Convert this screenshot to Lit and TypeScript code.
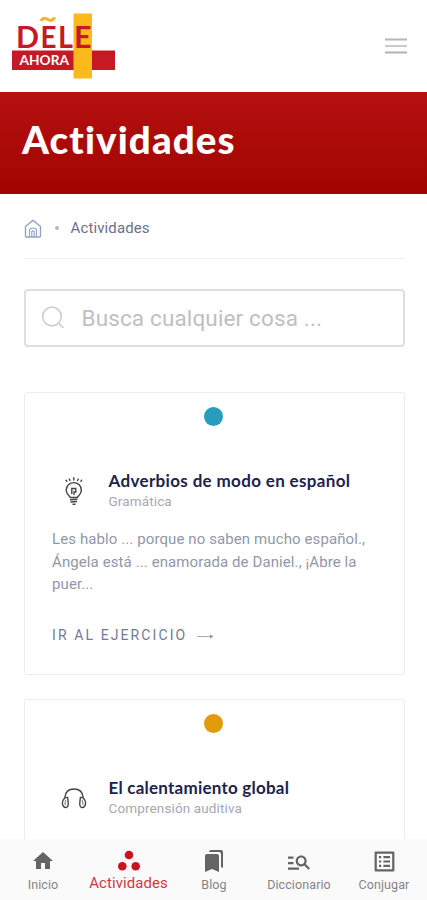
import { LitElement, html, css, svg, nothing } from "lit";
import { customElement, property } from "lit/decorators.js";

const bulb = svg`<g fill="none" stroke="#444" stroke-width="1.4" stroke-linecap="round">
  <path d="M9.300 20.500c-.5-1.700-4.100-3.200-4.100-7.300a7.600 7.600 0 0 1 15.200 0c0 4.100-3.600 5.600-4.100 7.300z"/>
  <path d="M10.800 16.500v-5h4v3.500h-1.800v2.500M9.500 22.800l6.300-.5M10 25l5.500-.5M12 27.200h2"/>
  <path d="M12.800 .8v2.200M8.200 2l.8 1.500M17.300 2l-.8 1.500M5 3.300l.8.900M20.700 3.300l-.8.900"/>
</g>`;

const phones = svg`<g fill="none" stroke="#444" stroke-width="1.4" stroke-linecap="round">
  <path d="M3.800 13.500C4.300 8 7.500 5 13 5s8.700 3 9.200 8.500"/>
  <path d="M6.600 13.500c-2.700-.6-4.900 2-5.200 5.300-.3 3.300 2 5.300 4.200 4.600 1.700-.6 1.700-2.600 1.600-4.800zM19.400 13.500c2.700-.6 4.900 2 5.200 5.300.3 3.300-2 5.300-4.200 4.600-1.700-.6-1.700-2.600-1.600-4.800z"/>
  <path d="M4.600 16.500l-.6 4M21.400 16.500l.6 4" stroke="#999"/>
</g>`;

@customElement("activity-card")
export class ActivityCard extends LitElement {
  @property() heading = "";
  @property() category = "";
  @property() excerpt = "";
  @property() kind = "bulb";

  static styles = css`
    :host { display: block; box-sizing: border-box; height: 283px; padding: 14px 28px 0 27px; background: #fff; border: 1.500px solid #ececee; border-radius: 3px; }
    .dot { width: 19px; height: 19px; border-radius: 50%; margin: 0 auto; background: #279dbe; }
    .dot.phones { background: #e09a0a; }
    .head { display: flex; align-items: center; margin-top: 42px; height: 43px; }
    .icon { width: 26px; height: 29px; margin: 4px 22px 0 9px; flex: none; }
    h2 { margin: 0; font: 700 17px/22px Lato, sans-serif; letter-spacing: .34px; color: #20234b; white-space: nowrap; }
    .phones h2 { letter-spacing: .23px; }
    .cat { font-size: 13.500px; line-height: 18px; color: #a5a8b5; letter-spacing: .13px; }
    p { margin: 17px 0 0 .5px; font-size: 15px; line-height: 22.500px; letter-spacing: .1px; color: #9297a9; white-space: pre; }
    .go { display: flex; align-items: center; margin: 30px 0 0 .5px; font-size: 14px; line-height: 18px; letter-spacing: 2.100px; color: #747a91; }
    .go svg { margin: 3px 0 0 10px; }
  `;

  render() {
    return html`
      <div class="dot ${this.kind}"></div>
      <div class="head ${this.kind}">
        <svg class="icon" viewBox="0 0 26 29">${this.kind === "bulb" ? bulb : phones}</svg>
        <div><h2>${this.heading}</h2><div class="cat">${this.category}</div></div>
      </div>
      ${this.excerpt ? html`<p>${this.excerpt}</p>
      <div class="go">IR AL EJERCICIO
        <svg width="17" height="7" viewBox="0 0 17 7"><path d="M0 3.500h15" stroke="#a9adb9"/><path d="M13 1.500l3.500 2-3.500 2z" fill="#8f94a5"/></svg>
      </div>` : nothing}`;
  }
}

const tabs = [
  { label: "Inicio", cls: "", icon: svg`<path d="M10 20v-6h4v6h5v-8h3L12 3 2 12h3v8z"/>` },
  { label: "Actividades", cls: "active", icon: svg`<circle cx="12" cy="6" r="4.300"/><circle cx="5.300" cy="17.200" r="4.300"/><circle cx="18.700" cy="17.200" r="4.300"/>` },
  { label: "Blog", cls: "", icon: svg`<path d="M19 18l2 1V3c0-1.100-.9-2-2-2H8.990C7.890 1 7 1.900 7 3h10c1.100 0 2 .9 2 2v13zM15 5H5c-1.100 0-2 .9-2 2v16l7-3 7 3V7c0-1.100-.9-2-2-2z"/>` },
  { label: "Diccionario", cls: "", icon: svg`<path transform="translate(-1.200 -.2) scale(1.100)" d="M7 9H2V7h5v2zm0 3H2v2h5v-2zm13.590 7l-3.830-3.830c-.8.520-1.740.830-2.760.830-2.760 0-5-2.240-5-5s2.240-5 5-5 5 2.240 5 5c0 1.020-.31 1.960-.83 2.750L22 17.590 20.590 19zM17 11c0-1.650-1.350-3-3-3s-3 1.350-3 3 1.350 3 3 3 3-1.350 3-3zM2 19h10v-2H2v2z"/>` },
  { label: "Conjugar", cls: "", icon: svg`<path transform="translate(-.7 -.7) scale(1.100)" d="M19 5v14H5V5h14m1.100-2H3.900c-.5 0-.9.400-.9.900v16.200c0 .4.400.9.900.9h16.200c.4 0 .9-.5.900-.9V3.900c0-.5-.5-.9-.9-.9zM11 7h6v2h-6V7zm0 4h6v2h-6v-2zm0 4h6v2h-6zM7 7h2v2H7zm0 4h2v2H7zm0 4h2v2H7z"/>` },
];

@customElement("app-root")
export class AppRoot extends LitElement {
  static styles = css`
    :host { display: flex; flex-direction: column; width: 427px; height: 900px; overflow: hidden; background: #fff; font-family: Roboto, sans-serif; }
    header { height: 92px; flex: none; display: flex; align-items: flex-start; justify-content: space-between; }
    .logo { font-family: Lato, sans-serif; font-weight: 700; }
    .menu { margin: 37px 20px 0 0; }
    .hero { height: 102px; flex: none; box-sizing: border-box; padding: 23px 22px 0; background: linear-gradient(#b51012, #a10500); }
    h1 { margin: 0; font: 900 38.500px/48px Lato, sans-serif; letter-spacing: 1.100px; color: #fff; white-space: nowrap; }
    main { flex: 1; min-height: 0; overflow: hidden; padding: 0 22px 0 23.500px; }
    .crumbs { height: 65px; box-sizing: border-box; border-bottom: 1.500px solid #efeff2; display: flex; align-items: center; padding-top: 4px; font-size: 15px; color: #6c7189; letter-spacing: .12px; }
    .sep { width: 4px; height: 4px; border-radius: 50%; background: #b4b8c5; margin: 0 12px 0 13px; }
    .search { height: 58px; box-sizing: border-box; margin: 30px 0 45px; border: 2px solid #dedede; border-radius: 4px; display: flex; align-items: center; padding-left: 15px; font-size: 22.500px; color: #bfbfbf; letter-spacing: .14px; }
    .search svg { margin-right: 17px; }
    activity-card + activity-card { margin-top: 24px; }
    nav { height: 61px; flex: none; background: #fafafa; display: grid; grid-template-columns: 86px 85px 86px 84px 86px; }
    .tab { display: flex; flex-direction: column; align-items: center; padding-top: 10px; font-size: 12.500px; line-height: 16px; color: #858585; white-space: nowrap; letter-spacing: .1px; }
    .tab svg { width: 24px; height: 24px; fill: #646464; margin-bottom: 4px; }
    .tab.active { color: #cf3941; font-size: 14.900px; }
    .active svg { fill: #c8141c; margin-bottom: 2px; }
  `;

  render() {
    return html`
      <header>
        <svg class="logo" width="125" height="90" viewBox="0 0 125 90">
          <rect x="12" y="50.500" width="103" height="19.500" fill="#c51a25"/>
          <rect x="73.500" y="13.500" width="18.500" height="65" fill="#fbb91c"/>
          <g fill="#c51a25" font-size="30">
            <text x="16" y="47.500" textLength="23" lengthAdjust="spacingAndGlyphs">D</text>
            <text x="40.500" y="47.500" textLength="16" lengthAdjust="spacingAndGlyphs">E</text>
            <text x="58" y="47.500" textLength="15" lengthAdjust="spacingAndGlyphs">L</text>
            <text x="74" y="47.500" textLength="17.500" lengthAdjust="spacingAndGlyphs">E</text>
          </g>
          <path d="M41 21c2-4 4.500-3 7-1.500s4.500 1.500 7-2" fill="none" stroke="#f7b42a" stroke-width="3"/>
          <text x="19.500" y="65" font-size="14" fill="#fff" textLength="49.500" lengthAdjust="spacingAndGlyphs">AHORA</text>
        </svg>
        <svg class="menu" width="22" height="18" viewBox="0 0 22 18"><g stroke-width="2"><path d="M0 2.500h22" stroke="#b5b5b5"/><path d="M0 9h22" stroke="#c9c9c9"/><path d="M0 15.500h22" stroke="#b2b2b2"/></g></svg>
      </header>
      <section class="hero"><h1>Actividades</h1></section>
      <main>
        <div class="crumbs">
          <svg width="18" height="19" viewBox="0 0 18 19" fill="none" stroke="#91a0c8" stroke-width="1.400"><path d="M1.500 7.500L9 1.200l7.500 6.300V17q0 1-1 1h-13q-1 0-1-1z" stroke-linejoin="round"/><path d="M5.500 18v-6.500q0-2.500 3.500-2.500t3.500 2.500V18M7.800 18v-5.500q1.200-1.200 2.400 0V18" stroke-width="1.100"/></svg>
          <i class="sep"></i><span>Actividades</span>
        </div>
        <div class="search">
          <svg width="24" height="24" viewBox="0 0 24 24" fill="none" stroke="#cfcfcf" stroke-width="1.700" stroke-linecap="round"><circle cx="11" cy="10.500" r="9.300"/><path d="M18 17.500l4 4"/></svg>
          <span>Busca cualquier cosa ...</span>
        </div>
        <activity-card heading="Adverbios de modo en español" category="Gramática" excerpt=${"Les hablo ... porque no saben mucho español.,\nÁngela está ... enamorada de Daniel., ¡Abre la\npuer..."}></activity-card>
        <activity-card kind="phones" heading="El calentamiento global" category="Comprensión auditiva"></activity-card>
      </main>
      <nav>${tabs.map((t) => html`<div class="tab ${t.cls}"><svg viewBox="0 0 24 24">${t.icon}</svg><span>${t.label}</span></div>`)}</nav>`;
  }
}
